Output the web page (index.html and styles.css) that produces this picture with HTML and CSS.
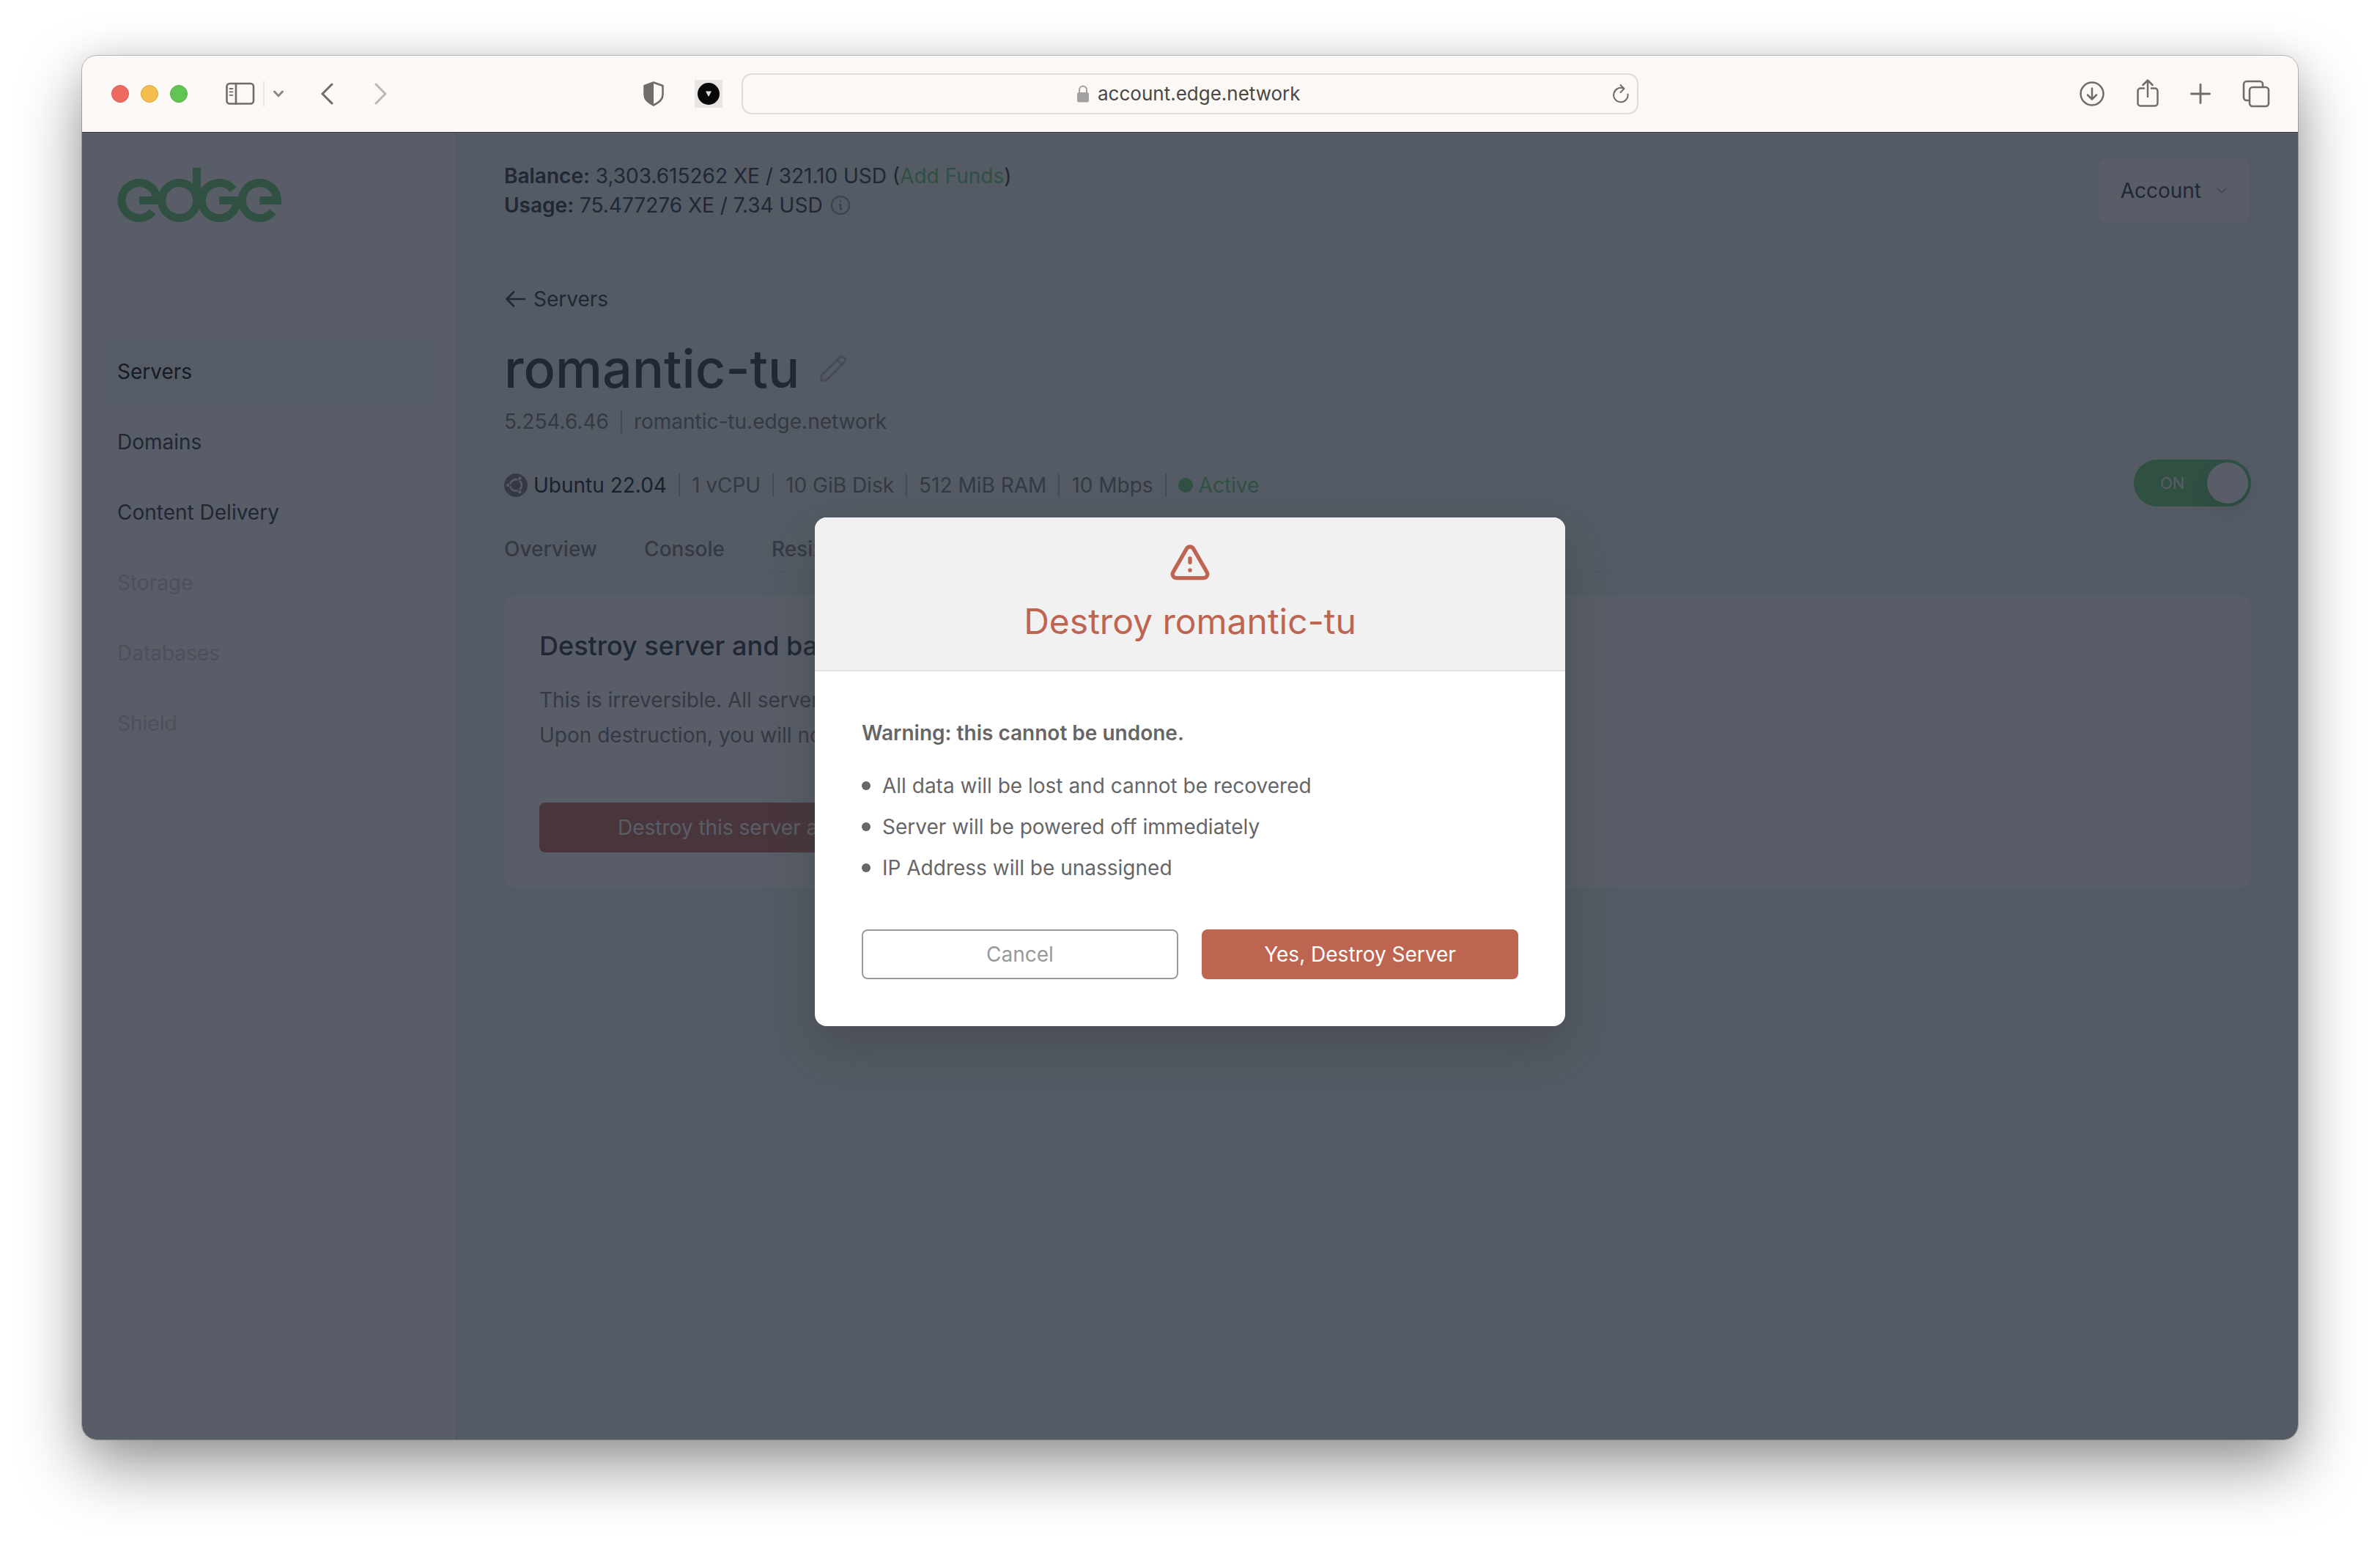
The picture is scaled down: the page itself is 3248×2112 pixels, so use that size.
FILE: index.html
```html
<!DOCTYPE html>
<html lang="en">
<head>
<meta charset="utf-8">
<title>romantic-tu - Edge Account</title>
<link rel="stylesheet" href="styles.css">
</head>
<body>
<div class="window">
  <div class="toolbar">
    <div class="toolbar-left">
      <div class="lights"><span class="light red"></span><span class="light yellow"></span><span class="light green"></span></div>
      <div class="side-controls">
        <button class="tool" aria-label="Show sidebar"><svg width="40" height="32" viewBox="0 0 40 32" fill="none" stroke="currentColor" stroke-width="2.6" stroke-linecap="round"><rect x="1.5" y="2" width="36.500" height="27.500" rx="4"/><path d="M14 2v27.500"/><path stroke-width="1.800" d="M5.500 9h4M5.500 13.400h4M5.500 17.800h4"/></svg></button>
        <span class="tool-divider"></span>
        <button class="tool faded" aria-label="Tab groups"><svg width="16" height="12" viewBox="0 0 16 12" fill="none" stroke="currentColor" stroke-width="3" stroke-linecap="round" stroke-linejoin="round"><path d="M2.500 3L8 8.800 13.500 3"/></svg></button>
      </div>
      <div class="history">
        <button class="tool" aria-label="Back"><svg width="18" height="32" viewBox="0 0 18 32" fill="none" stroke="currentColor" stroke-width="3" stroke-linecap="round" stroke-linejoin="round"><path d="M15 3L2 16l13 13"/></svg></button>
        <button class="tool light-tool" aria-label="Forward"><svg width="18" height="32" viewBox="0 0 18 32" fill="none" stroke="currentColor" stroke-width="3" stroke-linecap="round" stroke-linejoin="round"><path d="M3 3l13 13L3 29"/></svg></button>
      </div>
      <div class="extensions">
        <button class="tool" aria-label="Privacy report"><svg width="28" height="34" viewBox="0 0 28 34"><path d="M14 1.500L26.500 6v12c0 6-5 11-12.500 14.500C6.500 29 1.500 24 1.500 18V6z" fill="none" stroke="currentColor" stroke-width="2.600" stroke-linejoin="round"/><path d="M14 1L1 6v12c0 6 5 11.500 13 15z" fill="currentColor"/></svg></button>
        <button class="tool extension" aria-label="Extension"><svg width="30" height="30" viewBox="0 0 30 30"><circle cx="15" cy="15" r="15" fill="#080808"/><path d="M11 11.500h8L15 19z" fill="#ddd"/></svg></button>
      </div>
    </div>
    <div class="address">
      <span class="address-side"></span>
      <svg class="lock" width="16" height="24" viewBox="0 0 16 24"><rect x="0" y="10" width="16" height="13.500" rx="2.500" fill="#a2a19f"/><path d="M3 11V6.500a5 5 0 0 1 10 0V11" fill="none" stroke="#a2a19f" stroke-width="2"/></svg>
      <input class="url" type="text" aria-label="Address" value="account.edge.network">
      <div class="address-side"><button class="tool reload" aria-label="Reload"><svg width="24" height="28" viewBox="0 0 24 28" fill="none" stroke="currentColor" stroke-width="2" stroke-linecap="round" stroke-linejoin="round"><path d="M21.500 14.500A9.700 9.700 0 1 1 15.500 6.600"/><path d="M11.500 2l5 5-5 5"/></svg></button></div>
    </div>
    <div class="toolbar-right">
      <button class="tool" aria-label="Downloads"><svg width="36" height="40" viewBox="0 0 36 40" fill="none" stroke="currentColor" stroke-width="2.500" stroke-linecap="round" stroke-linejoin="round"><circle cx="18" cy="20" r="15.500"/><path d="M18 12.500V27M12 21.500l6 6 6-6"/></svg></button>
      <button class="tool" aria-label="Share"><svg width="30" height="40" viewBox="0 0 30 40" fill="none" stroke="currentColor" stroke-width="2.500" stroke-linecap="round" stroke-linejoin="round"><path d="M10 12.500H5A3.500 3.500 0 0 0 1.500 16v17A3.500 3.500 0 0 0 5 36.500h20a3.500 3.500 0 0 0 3.500-3.500V16a3.500 3.500 0 0 0-3.500-3.500h-5M15 24V1.500M8.500 8L15 1.500 21.500 8"/></svg></button>
      <button class="tool" aria-label="New tab"><svg width="28" height="28" viewBox="0 0 28 28" fill="none" stroke="currentColor" stroke-width="2.800" stroke-linecap="round"><path d="M14 1.500v25M1.500 14h25"/></svg></button>
      <button class="tool" aria-label="Tab overview"><svg width="38" height="38" viewBox="0 0 38 38" fill="none" stroke="currentColor" stroke-width="2.600" stroke-linejoin="round"><path d="M10 28H6a4 4 0 0 1-4-4V6a4 4 0 0 1 4-4h18a4 4 0 0 1 4 4v4"/><rect x="10" y="10" width="26" height="26" rx="4"/></svg></button>
    </div>
  </div>

  <div class="app">
    <aside class="sidebar">
      <a class="logo" href="#" aria-label="edge"><svg width="224" height="74" viewBox="0 0 224 74" fill="none" stroke="currentColor" stroke-width="11"><path d="M30 44.500H54A24 24 0 1 0 48.300 60"/><circle cx="84.700" cy="44.500" r="24"/><path d="M108.500 0v44.500"/><path d="M139.300 44.500H163.300A24 24 0 1 1 158.200 29.700"/><path d="M194.300 44.500H218.300A24 24 0 1 0 212.600 60"/></svg></a>
      <nav class="nav">
        <a class="nav-item active" href="#">Servers</a>
        <a class="nav-item" href="#">Domains</a>
        <a class="nav-item" href="#">Content Delivery</a>
        <a class="nav-item disabled" aria-disabled="true" href="#">Storage</a>
        <a class="nav-item disabled" aria-disabled="true" href="#">Databases</a>
        <a class="nav-item disabled" aria-disabled="true" href="#">Shield</a>
      </nav>
    </aside>
    <div class="main">
      <header class="header">
        <div class="funds">
          <div><strong>Balance:</strong> 3,303.615262 XE / 321.10 USD (<a class="green-link" href="#">Add Funds</a>)</div>
          <div class="usage"><span><strong>Usage:</strong> 75.477276 XE / 7.34 USD</span><svg class="info" width="28" height="28" viewBox="0 0 28 28" fill="none" stroke="currentColor" stroke-width="2.400" stroke-linecap="round" stroke-linejoin="round"><circle cx="14" cy="14" r="12"/><path d="M12.800 13H14v6.500h1.500M14 8.500v.1"/></svg></div>
        </div>
        <button class="account">Account<svg width="16" height="10" viewBox="0 0 16 10" fill="none" stroke="currentColor" stroke-width="2" stroke-linecap="round" stroke-linejoin="round"><path d="M2 2l6 6 6-6"/></svg></button>
      </header>
      <main class="content">
        <a class="back" href="#"><svg width="32" height="32" viewBox="0 0 32 32" fill="none" stroke="currentColor" stroke-width="2.600" stroke-linecap="round" stroke-linejoin="round"><path d="M28 16H3.500M13 6.500L3.500 16l9.500 9.500"/></svg>Servers</a>
        <div class="title-row">
          <h1 class="title">romantic-tu</h1>
          <button class="edit" aria-label="Rename server"><svg width="36" height="36" viewBox="0 0 36 36" fill="none" stroke="currentColor" stroke-width="3" stroke-linejoin="round"><path d="M2 34v-6.500L26.700 2.900a4.500 4.500 0 0 1 6.400 6.400L8.500 34zM23.500 6.100l6.400 6.400"/></svg></button>
        </div>
        <ul class="facts muted"><li>5.254.6.46</li><li>romantic-tu.edge.network</li></ul>
        <div class="status-row">
          <ul class="facts muted">
            <li class="os"><svg width="32" height="32" viewBox="0 0 32 32"><circle cx="16" cy="16" r="16" fill="#888889"/><g stroke="#f2f7f6" fill="none"><circle cx="16" cy="16" r="7.800" stroke-width="2.600" stroke-dasharray="14.300 2" transform="rotate(66 16 16)"/></g><g fill="#f2f7f6" stroke="#888889" stroke-width="1"><circle cx="5.300" cy="16" r="2.700"/><circle cx="21.400" cy="6.700" r="2.700"/><circle cx="21.400" cy="25.300" r="2.700"/></g></svg>Ubuntu 22.04</li>
            <li>1 vCPU</li><li>10 GiB Disk</li><li>512 MiB RAM</li><li>10 Mbps</li>
            <li class="state"><span class="dot"></span>Active</li>
          </ul>
          <label class="switch"><input type="checkbox" checked aria-label="Server power"><span class="switch-text">ON</span><span class="knob"></span></label>
        </div>
        <nav class="tabs"><a href="#">Overview</a><a href="#">Console</a><a href="#">Resize</a></nav>
        <section class="card">
          <h2 class="card-title">Destroy server and backups</h2>
          <p class="card-text">This is irreversible. All server data is lost.<br>Upon destruction, you will not pay.</p>
          <button class="btn danger wide">Destroy this server and IP</button>
        </section>
      </main>
    </div>

    <div class="overlay">
      <div class="modal" role="dialog" aria-modal="true" aria-labelledby="modal-title">
        <div class="modal-head">
          <svg width="64" height="64" viewBox="0 0 24 24" fill="none" stroke="currentColor" stroke-width="2" stroke-linecap="round" stroke-linejoin="round"><path d="M12 9v2m0 4h.01m-6.938 4h13.856c1.540 0 2.502-1.667 1.732-3L13.732 4c-.77-1.333-2.694-1.333-3.464 0L3.340 16c-.77 1.333.192 3 1.732 3z"/></svg>
          <h2 class="modal-title" id="modal-title">Destroy romantic-tu</h2>
        </div>
        <div class="modal-body">
          <strong>Warning: this cannot be undone.</strong>
          <ul class="warnings">
            <li>All data will be lost and cannot be recovered</li>
            <li>Server will be powered off immediately</li>
            <li>IP Address will be unassigned</li>
          </ul>
          <div class="actions">
            <button class="btn outline">Cancel</button>
            <button class="btn danger">Yes, Destroy Server</button>
          </div>
        </div>
      </div>
    </div>
  </div>
</div>
</body>
</html>
```

FILE: styles.css
```css
:root {
  --green: #78d284;
  --red: #be6552;
  --ink: #444b58;
  --muted: #888889;
  --line: #ecebee;
}

* { box-sizing: border-box; }

body {
  margin: 0;
  min-height: 100vh;
  padding: 76px 112px 148px;
  display: flex;
  background: #fff;
  font: 400 28px/40px Inter, "Liberation Sans", sans-serif;
  color: var(--ink);
}

h1, h2, p, ul { margin: 0; padding: 0; }
ul { list-style: none; }
a { color: inherit; text-decoration: none; }
button, input { font: inherit; color: inherit; }
button { border: 0; padding: 0; background: none; }
svg { display: block; flex: none; }
strong { font-weight: 600; }

/* Browser window */
.window {
  flex: 1;
  min-width: 0;
  display: flex;
  flex-direction: column;
  border-radius: 20px;
  overflow: hidden;
  background: #fcf8f5;
  box-shadow: 0 0 0 1px rgba(0, 0, 0, .22), 0 0 40px rgba(0, 0, 0, .08), 0 36px 88px rgba(0, 0, 0, .42);
}

.toolbar {
  height: 105px;
  flex: none;
  display: grid;
  grid-template-columns: 1fr 1224px 1fr;
  align-items: center;
  border-bottom: 1px solid #343845;
  color: #716c69;
}
.tool { display: flex; align-items: center; justify-content: center; }
.faded { color: #8b8786; }
.light-tool { color: #bbb7b4; }
.toolbar-left { display: flex; align-items: center; padding: 0 26px 0 40px; }
.lights { display: flex; gap: 16px; }
.light { width: 24px; height: 24px; border-radius: 50%; border: 1px solid; }
.red { background: #ed6a5e; border-color: #d9584d; }
.yellow { background: #f5bf4f; border-color: #dba63c; }
.green { background: #61c554; border-color: #4fae43; }
.side-controls { display: flex; align-items: center; gap: 11px; margin-left: 52px; }
.tool-divider { width: 2px; height: 36px; background: #ece8e5; }
.history { display: flex; gap: 54px; margin-left: 50px; }
.extensions { display: flex; align-items: center; gap: 42px; margin-left: auto; }
.extension { width: 38px; height: 38px; background: #e9e5e2; }

.address {
  height: 56px;
  display: flex;
  align-items: center;
  border: 2px solid #dfdbd8;
  border-radius: 14px;
}
.address-side { flex: 1; display: flex; justify-content: flex-end; padding-right: 10px; }
.lock { margin-right: 12px; }
.url {
  width: 280px;
  padding: 0;
  border: 0;
  outline: 0;
  background: none;
  font-size: 26px;
  color: #4a4745;
}
.toolbar-right { display: flex; align-items: center; justify-content: flex-end; gap: 43px; padding-right: 38px; }

/* Account app */
.app { position: relative; flex: 1; display: flex; background: #f2f7f6; }

.sidebar {
  width: 512px;
  flex: none;
  padding: 48px 24px;
  background: #fff;
  border-right: 2px solid var(--line);
}
.logo { display: block; padding-left: 24px; color: var(--green); }
.nav { display: flex; flex-direction: column; gap: 8px; margin-top: 160px; }
.nav-item { padding: 24px; border-radius: 12px; }
.active { background: #f6faf9; color: #222; }
.disabled { color: #d4d5d8; }

.main { flex: 1; min-width: 0; }
.header {
  height: 159px;
  display: flex;
  align-items: center;
  justify-content: space-between;
  padding: 0 64px;
  border-bottom: 2px solid var(--line);
}
.green-link { color: var(--green); }
.usage { display: flex; align-items: center; gap: 10px; }
.info { color: #a4a4a8; }
.account {
  display: flex;
  align-items: center;
  gap: 20px;
  height: 92px;
  padding: 0 30px;
  background: #fff;
  border: 2px solid #f3f2f5;
  border-radius: 12px;
}
.account svg { color: #bbb; }

.content { padding: 48px 64px; }
.back { display: flex; align-items: center; gap: 8px; }
.title-row { display: flex; align-items: center; gap: 28px; margin-top: 35px; }
.title { font-size: 72px; line-height: 80px; font-weight: 500; }
.edit { color: #c4c4c9; }
.muted { color: var(--muted); }
.facts { display: flex; align-items: center; margin-top: 16px; }
.facts li { display: flex; align-items: center; gap: 8px; line-height: 32px; }
.facts li + li { margin-left: 16px; padding-left: 16px; border-left: 2px solid #c4c4ca; }
.facts .os { color: #2e3644; }
.facts .state { color: var(--green); }
.dot { width: 20px; height: 20px; border-radius: 50%; background: var(--green); }

.status-row { display: flex; align-items: center; justify-content: space-between; margin-top: 36px; }
.status-row .facts { margin: 0; padding-top: 6px; }
.switch {
  position: relative;
  display: flex;
  align-items: center;
  justify-content: space-between;
  width: 160px;
  height: 64px;
  padding: 0 4px 0 36px;
  border-radius: 32px;
  background: var(--green);
  color: #fff;
  font-size: 22px;
}
.switch input { position: absolute; inset: 0; width: 100%; height: 100%; margin: 0; opacity: 0; }
.knob { width: 56px; height: 56px; border-radius: 50%; background: #fff; box-shadow: 0 12px 24px rgba(0, 0, 0, .1); }

.tabs {
  display: flex;
  gap: 64px;
  margin-top: 38px;
  padding-bottom: 10px;
  border-bottom: 2px solid var(--line);
  color: var(--muted);
  font-weight: 500;
}
.card { margin-top: 32px; padding: 48px; border-radius: 16px; background: #fff; }
.card-title { font-size: 36px; line-height: 40px; font-weight: 500; }
.card-text { margin-top: 30px; line-height: 48px; color: var(--muted); }

.btn { height: 68px; border-radius: 8px; text-align: center; }
.danger { background: var(--red); color: #fff; }
.wide { margin-top: 68px; padding: 0 107px; background: #ca7c70; }
.outline { border: 2px solid #999; color: #999; background: #fff; }

/* Confirmation dialog */
.overlay {
  position: absolute;
  inset: 0;
  display: flex;
  align-items: center;
  justify-content: center;
  padding-bottom: 40px;
  background: rgba(17, 24, 39, .7);
}
.modal {
  width: 1024px;
  border-radius: 16px;
  overflow: hidden;
  background: #fff;
  color: #666;
  box-shadow: 0 30px 60px rgba(60, 60, 60, .4);
}
.modal-head {
  display: flex;
  flex-direction: column;
  align-items: center;
  gap: 16px;
  padding: 32px 32px 36px;
  background: #f1f1f1;
  border-bottom: 2px solid #e4e4e4;
  color: var(--red);
}
.modal-title { font-size: 48px; line-height: 60px; font-weight: 400; }
.modal-body { padding: 64px; }
.warnings { display: flex; flex-direction: column; gap: 16px; margin-top: 32px; }
.warnings li { display: flex; align-items: center; gap: 16px; }
.warnings li::before { content: ""; width: 12px; height: 12px; border-radius: 50%; background: #666; }
.actions { display: grid; grid-template-columns: 1fr 1fr; gap: 32px; margin-top: 64px; }
```
